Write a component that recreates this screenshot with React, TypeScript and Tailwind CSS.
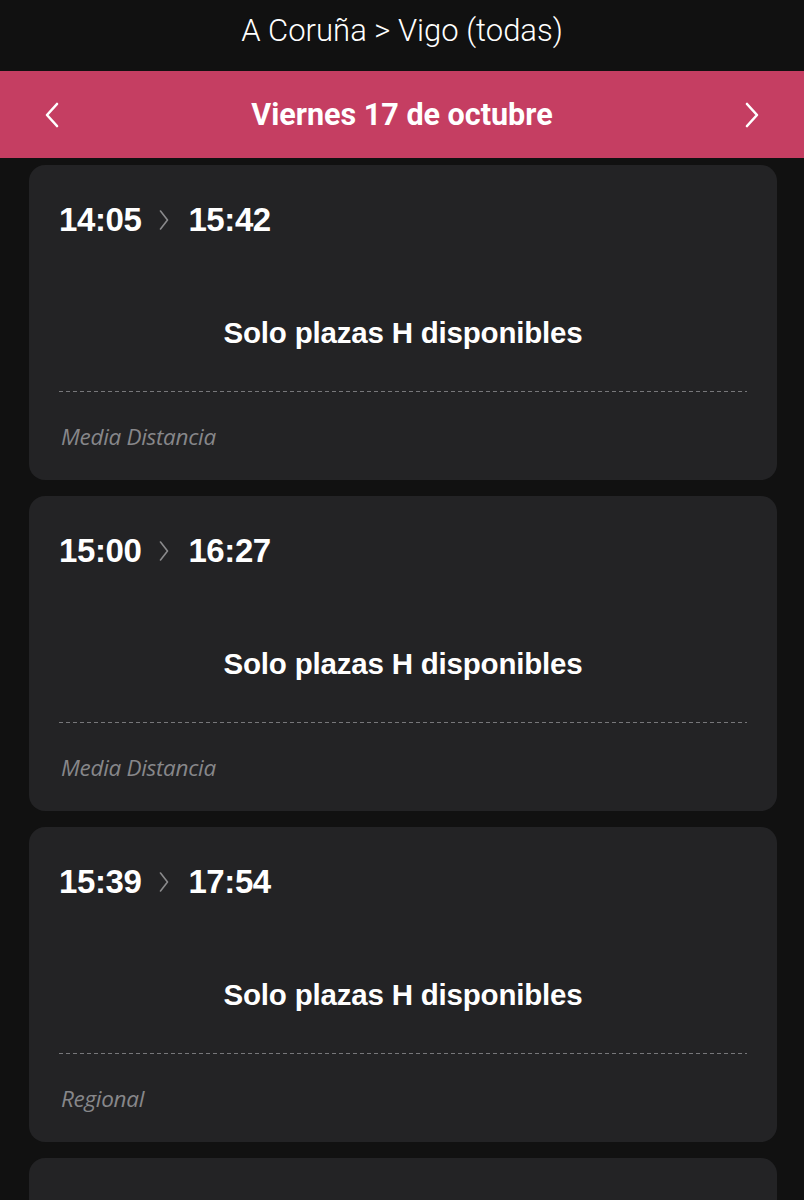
import React from 'react';

const trains = [
  { dep: '14:05', arr: '15:42', type: 'Media Distancia' },
  { dep: '15:00', arr: '16:27', type: 'Media Distancia' },
  { dep: '15:39', arr: '17:54', type: 'Regional' },
];

function Chevron({ dir, className }: { dir: 'left' | 'right'; className?: string }) {
  return (
    <svg viewBox="0 0 20 28" className={className} fill="none" stroke="currentColor" strokeWidth={2.6} strokeLinecap="round" strokeLinejoin="round">
      {dir === 'left' ? <polyline points="15,3 5,14 15,25" /> : <polyline points="5,3 15,14 5,25" />}
    </svg>
  );
}

function TrainCard({ dep, arr, type }: { dep: string; arr: string; type: string }) {
  return (
    <div className="h-[315px] shrink-0 rounded-[16px] bg-[#232325] px-[30px] pt-[38px] flex flex-col">
      <div className="flex items-center h-[34px] text-white font-bold text-[33px] font-['Liberation_Sans',sans-serif] tracking-[-0.4px]">
        <span>{dep}</span>
        <svg viewBox="0 0 10 20" className="w-[11px] h-[20px] ml-[17px] mr-[19px] text-[#8a8a8c]" fill="none" stroke="currentColor" strokeWidth={1.6} strokeLinecap="round" strokeLinejoin="round">
          <polyline points="2,1 9,10 2,19" />
        </svg>
        <span>{arr}</span>
      </div>
      <div className="mt-[80px] h-[32px] flex items-center justify-center text-white font-bold text-[29.5px] font-['Liberation_Sans',sans-serif] tracking-[-0.2px]">
        Solo plazas H disponibles
      </div>
      {/* dashed divider, dash 4 / gap 3 */}
      <div className="mt-[42px] h-[1px] bg-[repeating-linear-gradient(to_right,#77777a_0,#77777a_4px,transparent_4px,transparent_7px)]" />
      <div className="mt-[31px] h-[28px] flex items-center pl-[2px] text-[#87878a] italic text-[22.5px] font-['Open_Sans',sans-serif] tracking-[-0.3px]">
        {type}
      </div>
    </div>
  );
}

export default function App() {
  return (
    <div className="w-[804px] h-[1200px] overflow-hidden bg-[#111111] flex flex-col">
      <div className="h-[71px] shrink-0 flex items-center justify-center text-white text-[31px] font-['Roboto',sans-serif] font-light pb-[8px]">
        A Coruña &gt; Vigo (todas)
      </div>
      <div className="h-[87px] shrink-0 bg-[#c53e62] flex items-center justify-between px-[42px] text-white">
        <Chevron dir="left" className="w-[20px] h-[28px]" />
        <span className="font-['Roboto',sans-serif] font-bold text-[30.5px]">Viernes 17 de octubre</span>
        <Chevron dir="right" className="w-[20px] h-[28px]" />
      </div>
      <div className="flex flex-col gap-[16px] pt-[7px] pl-[29px] pr-[27px]">
        {trains.map((t) => (
          <TrainCard key={t.dep} {...t} />
        ))}
        <div className="h-[315px] shrink-0 rounded-[16px] bg-[#232325]" />
      </div>
    </div>
  );
}
